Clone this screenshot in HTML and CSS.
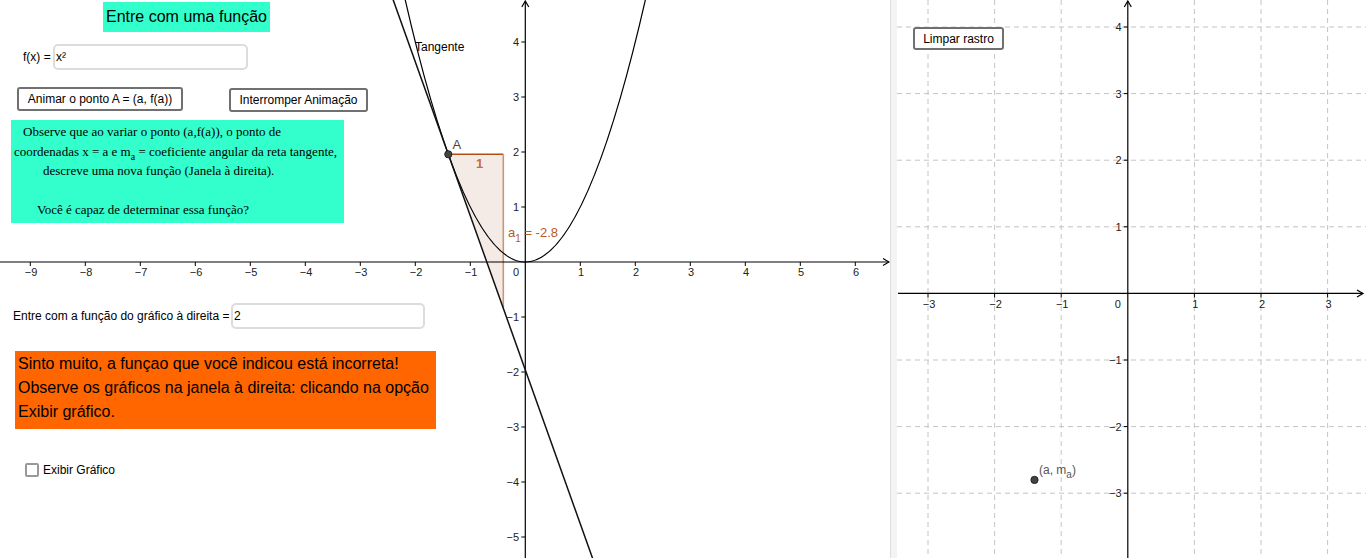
FILE: index.html
```html
<!DOCTYPE html>
<html lang="pt">
<head>
<meta charset="utf-8">
<title>Derivada</title>
<link rel="stylesheet" href="styles.css">
</head>
<body>
<div class="applet">
  <div class="view view-left">
    <svg class="graph" width="890" height="558" viewBox="0 0 890 558">
      <!-- slope triangle -->
      <polygon class="tri-fill" points="448.3,154.2 503.3,154.2 503.3,308.2"/>
      <line class="tri-h" x1="448.3" y1="154.2" x2="503.3" y2="154.2"/>
      <line class="tri-v" x1="503.3" y1="154.2" x2="503.3" y2="308.2"/>
      <!-- axes -->
      <g class="axis">
        <line x1="0" y1="262" x2="889" y2="262"/>
        <polyline points="883,258.5 889,262 883,265.5"/>
        <line x1="525.3" y1="1" x2="525.3" y2="558"/>
        <polyline points="521.8,7 525.3,1 528.8,7"/>
      </g>
      <g class="ticks">
        <line x1="30.3" y1="262" x2="30.3" y2="266"/>
        <line x1="85.3" y1="262" x2="85.3" y2="266"/>
        <line x1="140.3" y1="262" x2="140.3" y2="266"/>
        <line x1="195.3" y1="262" x2="195.3" y2="266"/>
        <line x1="250.3" y1="262" x2="250.3" y2="266"/>
        <line x1="305.3" y1="262" x2="305.3" y2="266"/>
        <line x1="360.3" y1="262" x2="360.3" y2="266"/>
        <line x1="415.3" y1="262" x2="415.3" y2="266"/>
        <line x1="470.3" y1="262" x2="470.3" y2="266"/>
        <line x1="580.3" y1="262" x2="580.3" y2="266"/>
        <line x1="635.3" y1="262" x2="635.3" y2="266"/>
        <line x1="690.3" y1="262" x2="690.3" y2="266"/>
        <line x1="745.3" y1="262" x2="745.3" y2="266"/>
        <line x1="800.3" y1="262" x2="800.3" y2="266"/>
        <line x1="855.3" y1="262" x2="855.3" y2="266"/>
        <line x1="521.3" y1="42" x2="525.3" y2="42"/>
        <line x1="521.3" y1="97" x2="525.3" y2="97"/>
        <line x1="521.3" y1="152" x2="525.3" y2="152"/>
        <line x1="521.3" y1="207" x2="525.3" y2="207"/>
        <line x1="521.3" y1="317" x2="525.3" y2="317"/>
        <line x1="521.3" y1="372" x2="525.3" y2="372"/>
        <line x1="521.3" y1="427" x2="525.3" y2="427"/>
        <line x1="521.3" y1="482" x2="525.3" y2="482"/>
        <line x1="521.3" y1="537" x2="525.3" y2="537"/>
      </g>
      <g class="xlabels">
        <text x="31" y="276">−9</text>
        <text x="86" y="276">−8</text>
        <text x="141" y="276">−7</text>
        <text x="196" y="276">−6</text>
        <text x="251" y="276">−5</text>
        <text x="306" y="276">−4</text>
        <text x="361" y="276">−3</text>
        <text x="416" y="276">−2</text>
        <text x="471" y="276">−1</text>
        <text x="516" y="276">0</text>
        <text x="581" y="276">1</text>
        <text x="636" y="276">2</text>
        <text x="691" y="276">3</text>
        <text x="746" y="276">4</text>
        <text x="801" y="276">5</text>
        <text x="856" y="276">6</text>
      </g>
      <g class="ylabels">
        <text x="519" y="46">4</text>
        <text x="519" y="101">3</text>
        <text x="519" y="156">2</text>
        <text x="519" y="211">1</text>
        <text x="519" y="321">−1</text>
        <text x="519" y="376">−2</text>
        <text x="519" y="431">−3</text>
        <text x="519" y="486">−4</text>
        <text x="519" y="541">−5</text>
      </g>
      <!-- function and tangent -->
      <path class="curve" d="M404.3,-4.2 Q525.3,528.2 646.3,-4.2"/>
      <line class="tangent" x1="392.5" y1="-2" x2="593.2" y2="560"/>
      <circle class="point" cx="448.3" cy="154.3" r="3.6"/>
      <text class="lbl-a" x="452.5" y="149">A</text>
      <text class="lbl-tan" x="415" y="51">Tangente</text>
      <text class="lbl-brown lbl-one" x="476" y="168">1</text>
      <text class="lbl-brown" x="508" y="237">a<tspan class="sub" dy="5">1</tspan><tspan dy="-5"> = -2.8</tspan></text>
    </svg>

    <div class="widgets">
      <div class="title-box">Entre com uma função</div>

      <div class="input-row fx-row">
        <span class="in-label fx-label">f(x) =</span>
        <div class="gg-input fx-input">x²</div>
      </div>

      <div class="btn-row">
        <button class="gg-btn btn-anim">Animar o ponto A = (a, f(a))</button>
        <button class="gg-btn btn-stop">Interromper Animação</button>
      </div>

      <div class="note-box">
        <div class="l1">Observe que ao variar o ponto (a,f(a)), o ponto de</div>
        <div class="l2">coordenadas x = a e m<sub>a</sub> = coeficiente angular da reta tangente,</div>
        <div class="l3">descreve uma nova função (Janela à direita).</div>
        <div class="l4">&nbsp;</div>
        <div class="l5">Você é capaz de determinar essa função?</div>
      </div>

      <div class="input-row g-row">
        <span class="in-label g-label">Entre com a função do gráfico à direita =</span>
        <div class="gg-input g-input">2</div>
      </div>

      <div class="warn-box">
        Sinto muito, a funçao que você indicou está incorreta!<br>
        Observe os gráficos na janela à direita: clicando na opção<br>
        Exibir gráfico.
      </div>

      <label class="check-row">
        <span class="check"></span>
        <span class="check-label">Exibir Gráfico</span>
      </label>
    </div>
  </div>

  <div class="splitter"></div>

  <div class="view view-right">
    <svg class="graph" width="469" height="558" viewBox="0 0 469 558">
      <g class="grid">
        <line x1="31" y1="0" x2="31" y2="558"/>
        <line x1="97.6" y1="0" x2="97.6" y2="558"/>
        <line x1="164.2" y1="0" x2="164.2" y2="558"/>
        <line x1="297.4" y1="0" x2="297.4" y2="558"/>
        <line x1="364" y1="0" x2="364" y2="558"/>
        <line x1="430.6" y1="0" x2="430.6" y2="558"/>
        <line x1="0" y1="27" x2="469" y2="27"/>
        <line x1="0" y1="93.6" x2="469" y2="93.6"/>
        <line x1="0" y1="160.2" x2="469" y2="160.2"/>
        <line x1="0" y1="226.8" x2="469" y2="226.8"/>
        <line x1="0" y1="360" x2="469" y2="360"/>
        <line x1="0" y1="426.6" x2="469" y2="426.6"/>
        <line x1="0" y1="493.2" x2="469" y2="493.2"/>
      </g>
      <g class="axis">
        <line x1="1" y1="293.4" x2="466" y2="293.4"/>
        <polyline points="460,289.9 466,293.4 460,296.9"/>
        <line x1="230.8" y1="1" x2="230.8" y2="558"/>
        <polyline points="227.3,7 230.8,1 234.3,7"/>
      </g>
      <g class="ticks">
        <line x1="31" y1="293.4" x2="31" y2="297.4"/>
        <line x1="97.6" y1="293.4" x2="97.6" y2="297.4"/>
        <line x1="164.2" y1="293.4" x2="164.2" y2="297.4"/>
        <line x1="297.4" y1="293.4" x2="297.4" y2="297.4"/>
        <line x1="364" y1="293.4" x2="364" y2="297.4"/>
        <line x1="430.6" y1="293.4" x2="430.6" y2="297.4"/>
        <line x1="226.8" y1="27" x2="230.8" y2="27"/>
        <line x1="226.8" y1="93.6" x2="230.8" y2="93.6"/>
        <line x1="226.8" y1="160.2" x2="230.8" y2="160.2"/>
        <line x1="226.8" y1="226.8" x2="230.8" y2="226.8"/>
        <line x1="226.8" y1="360" x2="230.8" y2="360"/>
        <line x1="226.8" y1="426.6" x2="230.8" y2="426.6"/>
        <line x1="226.8" y1="493.2" x2="230.8" y2="493.2"/>
      </g>
      <g class="xlabels">
        <text x="32" y="307.7">−3</text>
        <text x="98.6" y="307.7">−2</text>
        <text x="165.2" y="307.7">−1</text>
        <text x="220.7" y="307.7">0</text>
        <text x="298.4" y="307.7">1</text>
        <text x="365" y="307.7">2</text>
        <text x="431.6" y="307.7">3</text>
      </g>
      <g class="ylabels">
        <text x="224.5" y="31">4</text>
        <text x="224.5" y="97.6">3</text>
        <text x="224.5" y="164.2">2</text>
        <text x="224.5" y="230.8">1</text>
        <text x="224.5" y="364">−1</text>
        <text x="224.5" y="430.6">−2</text>
        <text x="224.5" y="497.2">−3</text>
      </g>
      <circle class="point" cx="137.5" cy="479.9" r="3.6"/>
      <text class="lbl-pt" x="142" y="474">(a, m<tspan class="sub" dy="4">a</tspan><tspan dy="-4">)</tspan></text>
    </svg>
    <div class="widgets widgets-right">
      <button class="gg-btn btn-clear">Limpar rastro</button>
    </div>
  </div>
</div>
</body>
</html>
```

FILE: styles.css
```css
html, body {
  margin: 0;
  padding: 0;
  background: #ffffff;
  overflow: hidden;
}

body {
  font-family: "Liberation Sans", Arial, sans-serif;
  color: #000;
}

.applet {
  display: flex;
  width: 1366px;
  height: 558px;
}

.view {
  position: relative;
  height: 558px;
  overflow: hidden;
  background: #fff;
}

.view-left {
  width: 890px;
}

.view-right {
  flex: 1;
}

.splitter {
  width: 6px;
  background: #f4f4f4;
  border-left: 1px solid #dedede;
}

.graph {
  display: block;
}

/* ---------- SVG graph styling ---------- */
.axis line,
.axis polyline {
  stroke: #000;
  stroke-width: 1.2;
  fill: none;
}

.ticks line {
  stroke: #000;
  stroke-width: 1;
}

.grid line {
  stroke: #c4c4c4;
  stroke-width: 1;
  stroke-dasharray: 5 4;
}

.xlabels text,
.ylabels text {
  font-family: "Liberation Sans", Arial, sans-serif;
  font-size: 11px;
  fill: #222;
}

.xlabels text {
  text-anchor: middle;
}

.ylabels text {
  text-anchor: end;
}

.curve {
  fill: none;
  stroke: #000;
  stroke-width: 1.2;
}

.tangent {
  stroke: #111;
  stroke-width: 1.5;
}

.tri-fill {
  fill: #f4ebe6;
  stroke: none;
}

.tri-h {
  stroke: #b24e14;
  stroke-width: 1.6;
}

.tri-v {
  stroke: #cf9474;
  stroke-width: 1.6;
}

.point {
  fill: #444;
  stroke: #222;
  stroke-width: 1;
}

.lbl-a {
  font-family: "Liberation Sans", Arial, sans-serif;
  font-size: 13px;
  fill: #444;
}

.lbl-tan {
  font-family: "Liberation Sans", Arial, sans-serif;
  font-size: 12px;
  fill: #000;
}

.lbl-brown {
  font-family: "Liberation Sans", Arial, sans-serif;
  font-size: 13px;
  fill: #b85a24;
}

.lbl-one {
  font-weight: bold;
  fill: #c0703f;
}

.lbl-pt {
  font-family: "Liberation Sans", Arial, sans-serif;
  font-size: 12px;
  fill: #555;
}

.sub {
  font-size: 10px;
}

/* ---------- widgets laid over the canvas ---------- */
.widgets {
  position: absolute;
  left: 0;
  top: 0;
  right: 0;
  bottom: 0;
  display: flex;
  flex-direction: column;
  align-items: flex-start;
}

.title-box {
  margin: 2px 0 0 103px;
  width: 167px;
  height: 30px;
  line-height: 30px;
  text-align: center;
  font-size: 16px;
  background: #33ffcc;
}

.input-row {
  display: flex;
  align-items: center;
  height: 26px;
}

.in-label {
  font-size: 12px;
}

.fx-row {
  margin: 12px 0 0 23px;
}

.fx-label {
  width: 30px;
}

.gg-input {
  box-sizing: border-box;
  height: 26px;
  border: 2px solid #dcdcdc;
  border-radius: 5px;
  background: #fff;
  font-size: 12px;
  line-height: 22px;
  padding-left: 1px;
}

.fx-input {
  width: 195px;
}

.btn-row {
  display: flex;
  margin: 17px 0 0 17px;
  gap: 46px;
}

.gg-btn {
  box-sizing: border-box;
  height: 24px;
  padding: 0;
  background: #fff;
  border: 2px solid #707070;
  border-radius: 3px;
  font-family: "Liberation Sans", Arial, sans-serif;
  font-size: 12px;
  color: #000;
  text-align: center;
}

.btn-anim {
  width: 166px;
}

.btn-stop {
  width: 139px;
  margin-top: 1px;
}

.note-box {
  box-sizing: border-box;
  margin: 8px 0 0 11px;
  width: 333px;
  height: 103px;
  padding: 2px 0 0 3px;
  background: #33ffcc;
  font-family: "Liberation Serif", "Times New Roman", serif;
  font-size: 13px;
  line-height: 19.5px;
  white-space: nowrap;
}

.note-box sub {
  font-size: 10px;
  line-height: 0;
  vertical-align: -4px;
}

.l1 { padding-left: 9px; }
.l3 { padding-left: 29px; }
.l5 { padding-left: 23px; }

.g-row {
  margin: 80px 0 0 13px;
}

.g-label {
  width: 218px;
  white-space: nowrap;
}

.g-input {
  width: 194px;
}

.warn-box {
  box-sizing: border-box;
  margin: 22px 0 0 15px;
  width: 421px;
  height: 78px;
  padding: 1px 0 0 3px;
  background: #ff6600;
  font-size: 16px;
  line-height: 24px;
  white-space: nowrap;
}

.check-row {
  display: flex;
  align-items: center;
  margin: 34px 0 0 25px;
  gap: 4px;
}

.check {
  box-sizing: border-box;
  width: 14px;
  height: 14px;
  border: 2px solid #999;
  border-radius: 2px;
  background: #fff;
}

.check-label {
  font-size: 12px;
}

.widgets-right {
  padding: 27px 0 0 16px;
}

.btn-clear {
  width: 91px;
  height: 23px;
}
```
